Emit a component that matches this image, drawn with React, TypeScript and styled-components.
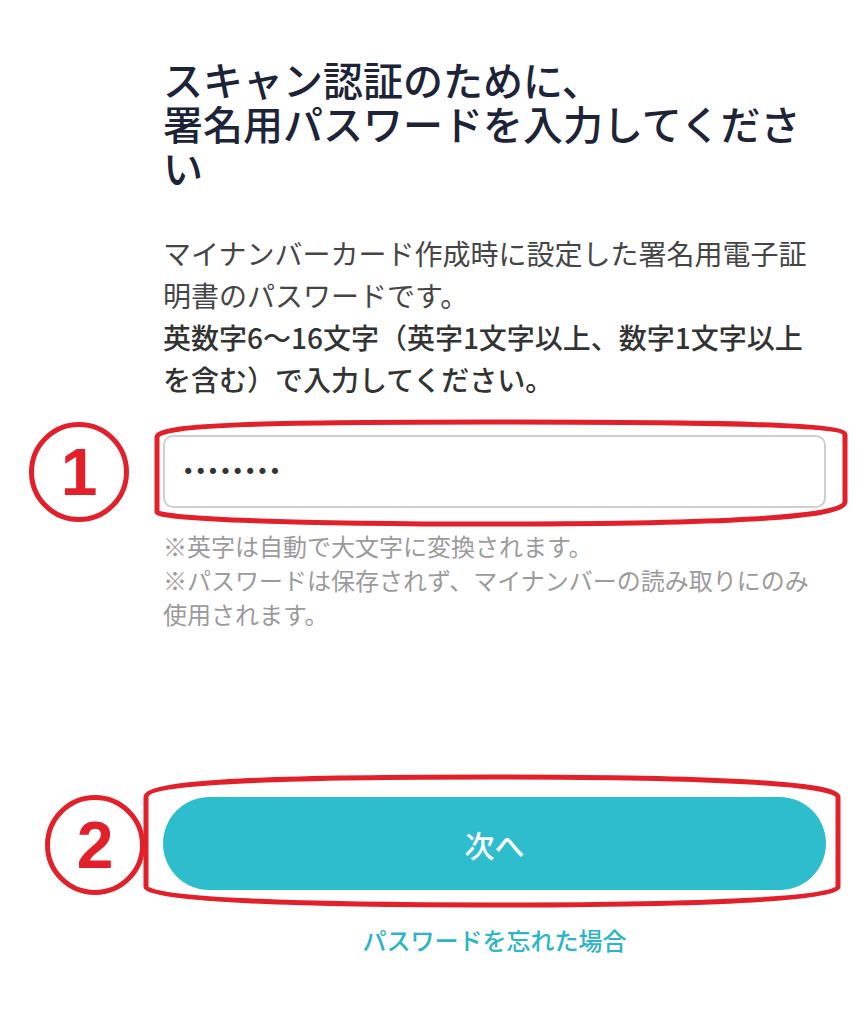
import React from "react"
import styled, { createGlobalStyle } from "styled-components"

const GlobalStyle = createGlobalStyle`
  html, body {
    margin: 0;
    padding: 0;
    background: #ffffff;
  }
  body {
    font-family: "Noto Sans CJK JP", "Noto Sans", sans-serif;
  }
`

const Page = styled.main`
  width: 858px;
  box-sizing: border-box;
  padding: 57px 32px 40px 163px;
  display: flex;
  flex-direction: column;
`

const Title = styled.h1`
  margin: 0;
  font-size: 40px;
  line-height: 44px;
  font-weight: 500;
  color: #1e2438;
`

const Lead = styled.p`
  margin: 43px 0 0;
  font-size: 28px;
  line-height: 42px;
  color: #454545;
  & strong {
    font-weight: 500;
    color: #333333;
  }
`

const Field = styled.div`
  position: relative;
  margin-top: 35px;
`

const PasswordInput = styled.input`
  display: block;
  width: 100%;
  box-sizing: border-box;
  height: 73px;
  padding: 0 17px;
  border: 2px solid #cfcfcf;
  border-radius: 10px;
  background: #fff;
  font-family: "DejaVu Sans", sans-serif;
  font-size: 21px;
  color: #333;
  outline: none;
`

const Notes = styled.div`
  margin-top: 21px;
  font-size: 24px;
  line-height: 34px;
  color: #9b9b9b;
`

const Note = styled.p`
  margin: 0;
`

const Actions = styled.div`
  margin-top: 166px;
  display: flex;
  flex-direction: column;
  align-items: center;
  gap: 33px;
`

const ButtonWrap = styled.div`
  position: relative;
  width: 100%;
`

const NextButton = styled.button`
  display: block;
  width: 100%;
  height: 93px;
  border: none;
  border-radius: 47px;
  background: #2ebdcc;
  color: #ffffff;
  font-family: "Noto Sans CJK JP", sans-serif;
  font-size: 30px;
  font-weight: 500;
  cursor: pointer;
`

const ForgotLink = styled.a`
  font-size: 24px;
  line-height: 34px;
  font-weight: 500;
  color: #2bb5c6;
  text-decoration: none;
  cursor: pointer;
`

/* red markup drawn over the screenshot */
const Markup = styled.svg<{ $left: number; $top: number }>`
  position: absolute;
  left: ${p => p.$left}px;
  top: ${p => p.$top}px;
  overflow: visible;
  pointer-events: none;
`

const StepBadge = styled.div<{ $left: number; $top: number }>`
  position: absolute;
  left: ${p => p.$left}px;
  top: ${p => p.$top}px;
  width: 90px;
  height: 90px;
  border: 5px solid #e3202a;
  border-radius: 50%;
  display: flex;
  align-items: center;
  justify-content: center;
  color: #e3202a;
  font-family: "Liberation Sans", sans-serif;
  font-size: 66px;
  font-weight: 700;
  line-height: 1;
`

function App() {
  return (
    <>
      <GlobalStyle />
      <Page>
        <Title>
          スキャン認証のために、
          <br />
          署名用パスワードを入力してください
        </Title>
        <Lead>
          マイナンバーカード作成時に設定した署名用電子証明書のパスワードです。
          <br />
          <strong>
            英数字6〜16文字（英字1文字以上、数字1文字以上を含む）で入力してください。
          </strong>
        </Lead>

        <Field>
          <PasswordInput type="password" value="abcd1234" readOnly />
          <StepBadge $left={-134} $top={-13}>1</StepBadge>
          <Markup $left={-9} $top={-15} width="694" height="106">
            <path
              d="M3 17 C3 4 120 2 340 2 C560 2 691 4 691 15 L691 82 C691 98 560 104 340 104 C120 104 3 98 3 92 Z"
              fill="none"
              stroke="#e3202a"
              strokeWidth="5"
            />
          </Markup>
        </Field>

        <Notes>
          <Note>※英字は自動で大文字に変換されます。</Note>
          <Note>※パスワードは保存されず、マイナンバーの読み取りにのみ使用されます。</Note>
        </Notes>

        <Actions>
          <ButtonWrap>
            <NextButton type="button">次へ</NextButton>
            <StepBadge $left={-118} $top={-2}>2</StepBadge>
            <Markup $left={-20} $top={-22} width="698" height="132">
              <path
                d="M3 22 C3 6 140 2 350 2 C560 2 695 8 695 22 L695 112 C695 124 560 130 350 130 C140 130 3 124 3 112 Z"
                fill="none"
                stroke="#e3202a"
                strokeWidth="5"
              />
            </Markup>
          </ButtonWrap>
          <ForgotLink>パスワードを忘れた場合</ForgotLink>
        </Actions>
      </Page>
    </>
  )
}

export default App
